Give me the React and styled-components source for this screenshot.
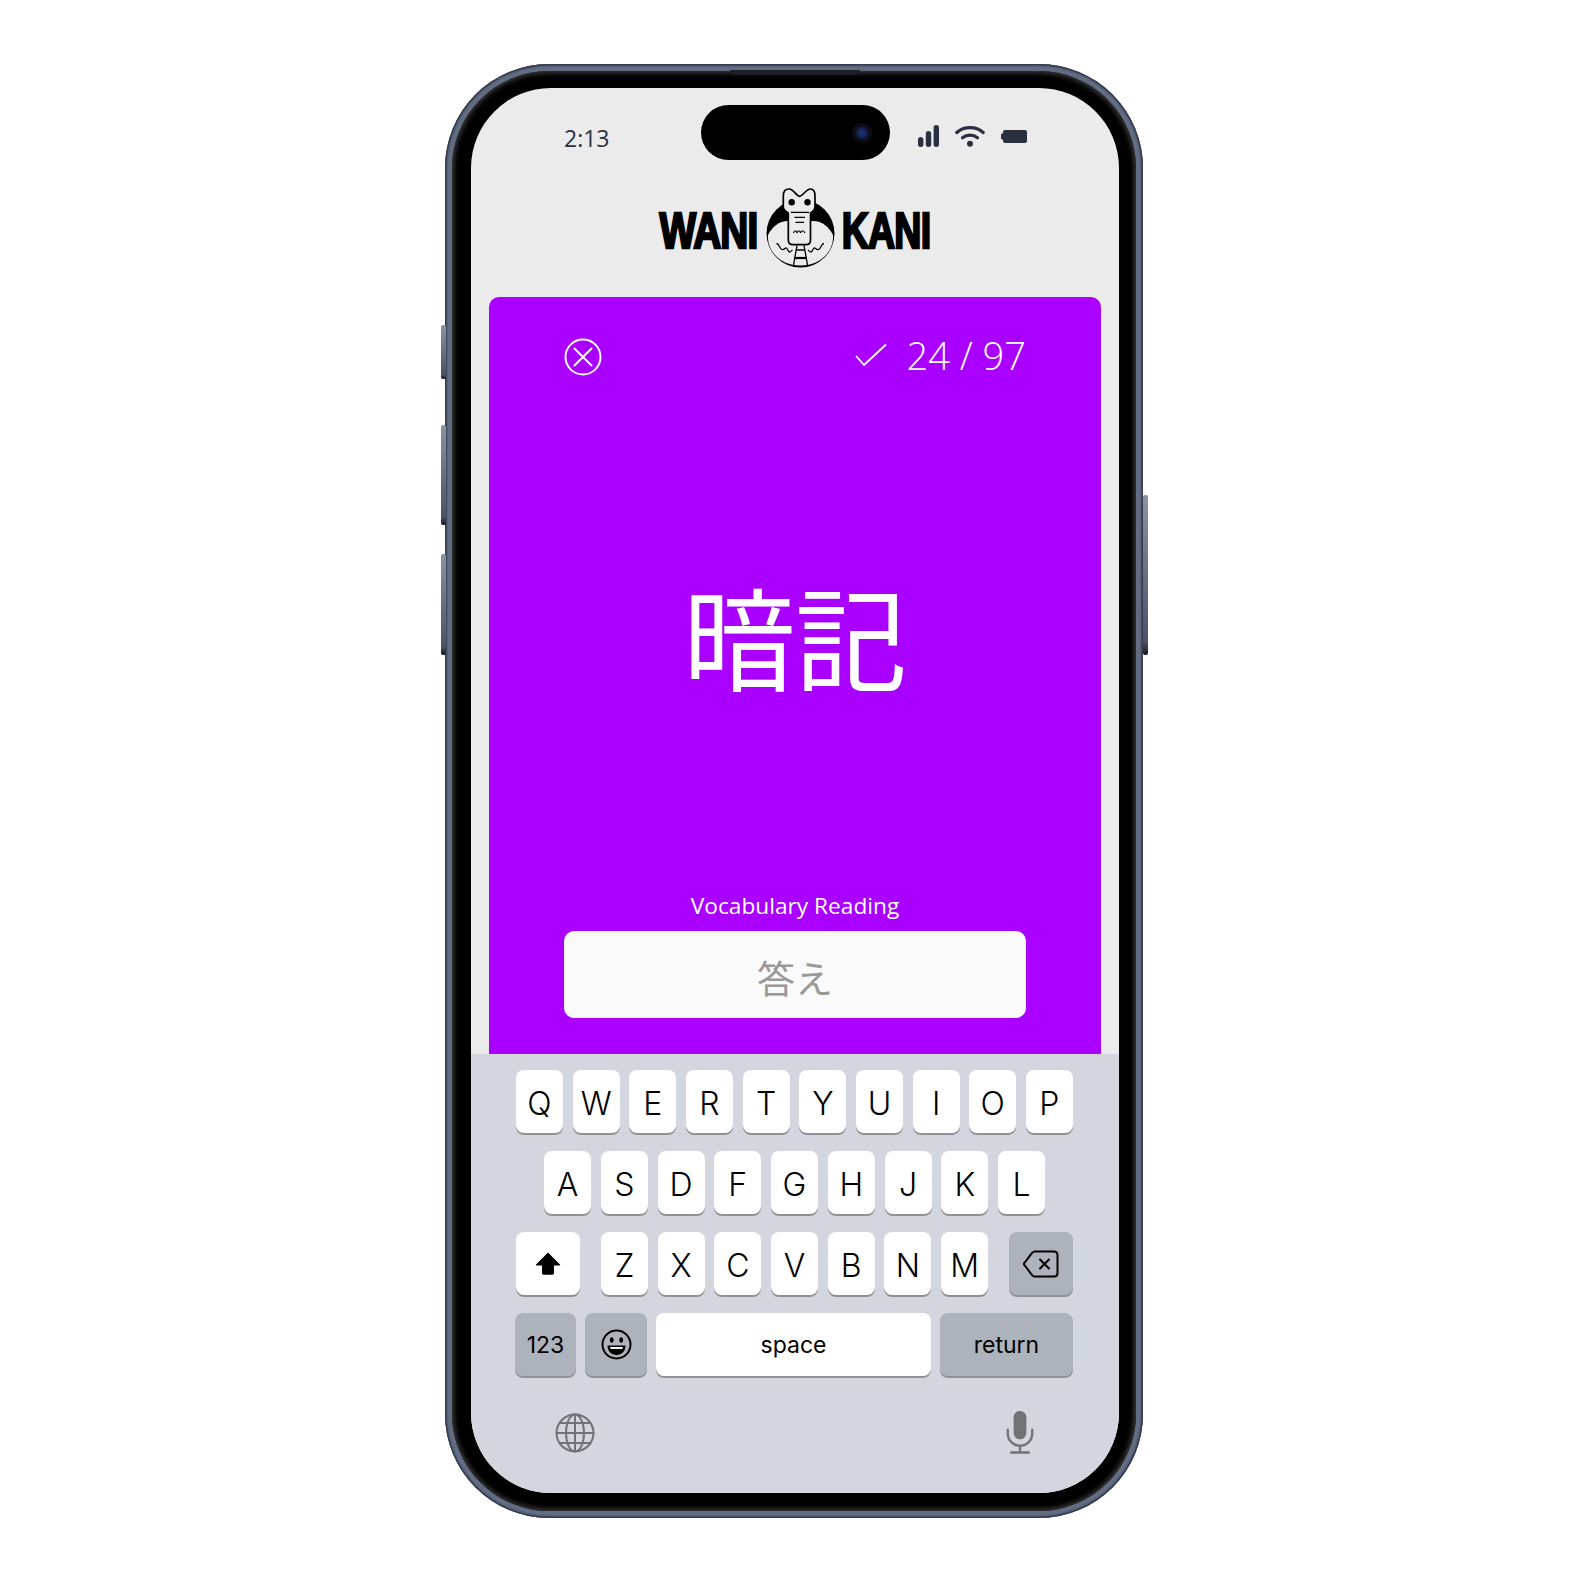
import React from 'react';
import styled, { createGlobalStyle } from 'styled-components';

const rows = ['QWERTYUIOP'.split(''), 'ASDFGHJKL'.split(''), 'ZXCVBNM'.split('')];

const App = () => {
  return (
    <Page>
      <GlobalStyle />
      <Frame>
        <SideButton $top={261} $h={54} />
        <SideButton $top={361} $h={100} />
        <SideButton $top={490} $h={101} />
        <SideButton $right $top={431} $h={160} />
        <Bezel>
          <Speaker />
          <Screen>
            <Top>
              <StatusBar>
                <Time>2:13</Time>
                <Island><Camera /></Island>
                <StatusIcons>
                  <svg width="21" height="22" viewBox="0 0 21 22" fill="#2b3040">
                    <rect x="0" y="12" width="5.4" height="10" rx="2.7" />
                    <rect x="7.8" y="6" width="5.4" height="16" rx="2.7" />
                    <rect x="15.6" y="0" width="5.4" height="22" rx="2.7" />
                  </svg>
                  <svg width="30" height="22" viewBox="0 0 30 22" fill="none" stroke="#2b3040" strokeWidth="3.2" strokeLinecap="round">
                    <path d="M1.8 7.5C9 1 21 1 28.2 7.5" />
                    <path d="M7.5 12.8c4.4-3.6 10.6-3.6 15 0" />
                    <circle cx="15" cy="18.8" r="3" fill="#2b3040" stroke="none" />
                  </svg>
                  <svg width="26" height="13" viewBox="0 0 26 13" fill="#2b3040">
                    <rect x="2" y="0" width="24" height="13" rx="2" />
                    <rect x="0" y="3.5" width="3" height="6" rx="1" />
                  </svg>
                </StatusIcons>
              </StatusBar>
              <Logo>
                <LogoWord $w={99} $scale={0.775}>WANI</LogoWord>
                <Gator />
                <LogoWord $w={84} $scale={0.75}>KANI</LogoWord>
              </Logo>
              <Card>
                <CardHeader>
                  <svg width="38" height="38" viewBox="0 0 38 38" fill="none" stroke="#fff" strokeWidth="2" strokeLinecap="round">
                    <circle cx="19" cy="19" r="17.5" />
                    <path d="M10.5 10.5l17 17M27.5 10.5l-17 17" />
                  </svg>
                  <Progress>
                    <svg width="32" height="24" viewBox="0 0 32 24" fill="none" stroke="#fff" strokeWidth="1.8" strokeLinecap="round" strokeLinejoin="round">
                      <path d="M1.5 13.5l7.5 8.5L30.5 2" />
                    </svg>
                    <Count>24 / 97</Count>
                  </Progress>
                </CardHeader>
                <Kanji lang="ja">暗記</Kanji>
                <Label>Vocabulary Reading</Label>
                <AnswerBox lang="ja">答え</AnswerBox>
              </Card>
            </Top>
            <Keyboard>
              <LetterRow>
                {rows[0].map((k) => <Key key={k}>{k}</Key>)}
              </LetterRow>
              <LetterRow $inset={28}>
                {rows[1].map((k) => <Key key={k}>{k}</Key>)}
              </LetterRow>
              <ShiftRow>
                <ActionKey $w={64} $light>
                  <svg width="26" height="26" viewBox="0 0 26 26" fill="#000">
                    <path d="M13 1.5L25 13.5c.4.5.2 1-.5 1H19v7.5c0 1-.7 1.7-1.7 1.7H8.7c-1 0-1.7-.7-1.7-1.7v-7.5H1.5c-.7 0-.9-.5-.5-1z" />
                  </svg>
                </ActionKey>
                <ShiftLetters>
                  {rows[2].map((k) => <Key key={k}>{k}</Key>)}
                </ShiftLetters>
                <ActionKey $w={64}>
                  <svg width="36" height="28" viewBox="0 0 36 28" fill="none" stroke="#000" strokeWidth="2" strokeLinejoin="round" strokeLinecap="round">
                    <path d="M12 1.5h19c2 0 3.5 1.5 3.5 3.5v18c0 2-1.5 3.5-3.5 3.5H12c-1 0-2-.4-2.7-1.2L1.5 15.2c-.7-.7-.7-1.7 0-2.4L9.3 2.7C10 1.9 11 1.5 12 1.5z" />
                    <path d="M17 9.5l9 9M26 9.5l-9 9" />
                  </svg>
                </ActionKey>
              </ShiftRow>
              <BottomRow>
                <ActionKey $w={61}><SmallText>123</SmallText></ActionKey>
                <ActionKey $w={62}>
                  <svg width="31" height="31" viewBox="0 0 31 31">
                    <circle cx="15.5" cy="15.5" r="14" fill="none" stroke="#000" strokeWidth="2" />
                    <ellipse cx="10.8" cy="11" rx="1.9" ry="2.8" fill="#000" />
                    <ellipse cx="20.2" cy="11" rx="1.9" ry="2.8" fill="#000" />
                    <path d="M6.5 16.5h18c0 6-4 9.5-9 9.5s-9-3.500-9-9.500z" fill="#000" />
                    <path d="M9 18h13c-.3 1.500-.8 2-1.500 2h-10c-.7 0-1.200-.5-1.500-2z" fill="#fff" />
                  </svg>
                </ActionKey>
                <SpaceKey><SmallText>space</SmallText></SpaceKey>
                <ActionKey $w={133}><SmallText>return</SmallText></ActionKey>
              </BottomRow>
              <SystemRow>
                <svg width="40" height="40" viewBox="0 0 40 40" fill="none" stroke="#6f7277" strokeWidth="2">
                  <circle cx="20" cy="20" r="18.5" />
                  <ellipse cx="20" cy="20" rx="9" ry="18.5" />
                  <path d="M20 1.5v37M1.5 20h37M4.5 10h31M4.5 30h31" />
                </svg>
                <svg width="28" height="43" viewBox="0 0 28 44" fill="none" stroke="#6f7277" strokeWidth="2.4">
                  <rect x="7.5" y="0" width="13" height="29" rx="6.5" fill="#6f7277" stroke="none" />
                  <path d="M1.5 19v4c0 7 5.6 12.5 12.5 12.5S26.5 30 26.5 23v-4" strokeLinecap="round" />
                  <path d="M14 35.5V42M4 42.5h20" />
                </svg>
              </SystemRow>
            </Keyboard>
          </Screen>
        </Bezel>
      </Frame>
    </Page>
  );
};

const Gator = () => (
  <svg width="70" height="80" viewBox="0 0 70 80">
    <circle cx="34.5" cy="45.5" r="34" fill="#000" />
    <path d="M2 47C6 39 13 33 22 33H47C56 33 63 39 67 47C68 64 54 77.5 34.5 77.5S1 64 2 47Z" fill="#ebebeb" />
    <g fill="none" stroke="#000" strokeWidth="1.3">
      <path d="M10.500 55.500c3 0 2.500 5 5.500 6c3 1 3.500-4 5.500 0s2.500 2.500 5 .5" />
      <path d="M58 55.500c-3 0-2.500 5-5.500 6c-3 1-3.500-4-5.500 0s-2.500 2.500-5 .5" />
      <path d="M31 57.500l-3.500 19.500M38 57.500l3.500 19.500M29.500 62h10" />
      <path d="M28.500 70h12" strokeWidth="2.200" />
    </g>
    <path d="M17.300 8C17.300 3.500 19 1 23 1C28 1 30 8 33.500 8.300C37 8 40 1 44.500 1C47.500 1 49 3.500 49 8V19Q49 22 44.500 25V52Q44.500 56.700 40 56.700H27Q22.300 56.700 22.300 52V25Q17.300 22 17.300 19Z" fill="#ebebeb" stroke="#000" strokeWidth="1.700" strokeLinejoin="round" />
    <circle cx="25.700" cy="14.300" r="3.200" fill="#000" />
    <circle cx="41.500" cy="14.300" r="3.200" fill="#000" />
    <g fill="none" stroke="#000" strokeWidth="1.200">
      <path d="M25 24.300h18" />
      <path d="M28.500 29.300h10.500M29.500 34.300h8.500" />
      <path d="M27.500 45c1-3 3-3 3.500 0c1-3 3-3 3.500 0c1-3 3-3 4.500 0" />
    </g>
  </svg>
);

export default App;

const GlobalStyle = createGlobalStyle`
  html, body {
    margin: 0;
    background: #fff;
  }
`;

const Page = styled.div`
  width: 1590px;
  height: 1590px;
  box-sizing: border-box;
  padding: 64px 0 0 445px;
`;

const Frame = styled.div`
  position: relative;
  width: 698px;
  height: 1454px;
  box-sizing: border-box;
  padding: 7px;
  border-radius: 104px;
  background: #626d84;
  box-shadow:
    inset 0 0 0 1.5px #343b4d,
    inset 0 0 0 3px #566177;
`;

const SideButton = styled.div`
  position: absolute;
  top: ${(p) => p.$top}px;
  ${(p) => (p.$right ? 'right: -5px;' : 'left: -4px;')}
  width: 5px;
  height: ${(p) => p.$h}px;
  border-radius: 2px;
  background: linear-gradient(180deg, #8a92a3, #4a5366 92%, #14161c);
`;

const Bezel = styled.div`
  position: relative;
  height: 100%;
  box-sizing: border-box;
  padding: 17px 17px 18px 19px;
  border-radius: 97px;
  background: #000;
  box-shadow: inset 0 0 5px 2px #3c3c3c;
`;

const Speaker = styled.div`
  position: absolute;
  top: -1px;
  left: 278px;
  width: 130px;
  height: 5px;
  border-radius: 0 0 6px 6px;
  background: #1d2029;
`;

const Screen = styled.div`
  display: flex;
  flex-direction: column;
  height: 100%;
  border-radius: 80px;
  overflow: hidden;
  background: #ebebeb;
`;

const Top = styled.div`
  display: flex;
  flex-direction: column;
  height: 966px;
  padding: 0 18px;
`;

const StatusBar = styled.div`
  display: grid;
  grid-template-columns: 1fr 189px 1fr;
  align-items: center;
  padding-top: 17px;
`;

const Time = styled.div`
  padding: 10px 0 0 75px;
  font-family: "Open Sans", sans-serif;
  font-size: 23px;
  color: #2b3040;
`;

const Island = styled.div`
  display: flex;
  align-items: center;
  justify-content: flex-end;
  height: 55px;
  padding-right: 18px;
  border-radius: 28px;
  background: #000;
`;

const Camera = styled.div`
  width: 20px;
  height: 20px;
  border-radius: 50%;
  background: radial-gradient(circle, #1b2a6b 0 3px, #0c0d18 7px);
`;

const StatusIcons = styled.div`
  display: flex;
  align-items: center;
  justify-content: flex-end;
  gap: 16px;
  padding: 7px 74px 0 0;
`;

const Logo = styled.div`
  display: flex;
  align-items: flex-end;
  justify-content: center;
  gap: 8px;
  height: 80px;
  margin-top: 28px;
  padding-right: 3px;
`;

const LogoWord = styled.div`
  display: flex;
  justify-content: center;
  width: ${(p) => p.$w}px;
  margin-bottom: 14px;
  font-family: "Liberation Sans", sans-serif;
  font-size: 50px;
  line-height: 46px;
  font-weight: 700;
  letter-spacing: -1px;
  color: #000;
  -webkit-text-stroke: 2.5px #000;
  transform: scaleX(${(p) => p.$scale});
`;

const Card = styled.div`
  display: flex;
  flex: 1;
  flex-direction: column;
  margin-top: 29px;
  padding: 0 75px 36px;
  border-radius: 10px 10px 0 0;
  background: #aa00ff;
  color: #fff;
`;

const CardHeader = styled.div`
  display: flex;
  align-items: center;
  justify-content: space-between;
  margin-top: 41px;
`;

const Progress = styled.div`
  display: flex;
  align-items: center;
  gap: 20px;
  margin-top: -4px;
`;

const Count = styled.div`
  font-family: "Open Sans", sans-serif;
  font-size: 38px;
  font-weight: 300;
  line-height: 38px;
`;

const Kanji = styled.div`
  display: flex;
  flex: 1;
  align-items: center;
  justify-content: center;
  padding-top: 2px;
  font-family: "Noto Sans CJK JP", sans-serif;
  font-size: 112px;
  line-height: 1;
`;

const Label = styled.div`
  margin-bottom: 9px;
  font-family: "Open Sans", sans-serif;
  font-size: 22.7px;
  line-height: 32px;
  text-align: center;
`;

const AnswerBox = styled.div`
  display: flex;
  align-items: center;
  justify-content: center;
  height: 87px;
  box-sizing: border-box;
  padding-top: 4px;
  border-radius: 10px;
  background: #fafafa;
  font-family: "Noto Sans CJK JP", sans-serif;
  font-size: 38px;
  color: #999;
`;

const Keyboard = styled.div`
  display: flex;
  flex: 1;
  flex-direction: column;
  gap: 18px;
  padding: 16px 46px 0 45px;
  background: #d3d6de;
`;

const LetterRow = styled.div`
  display: flex;
  justify-content: space-between;
  padding: 0 ${(p) => p.$inset || 0}px;
`;

const ShiftRow = styled.div`
  display: flex;
  justify-content: space-between;
`;

const ShiftLetters = styled.div`
  display: flex;
  gap: 9.7px;
`;

const BottomRow = styled.div`
  display: flex;
  gap: 9px;
  margin-left: -1px;
`;

const Key = styled.div`
  display: flex;
  align-items: center;
  justify-content: center;
  width: 47px;
  height: 63px;
  box-sizing: border-box;
  padding-top: 3px;
  border-radius: 8px;
  background: #fff;
  box-shadow: 0 2px 0 #8f9196;
  font-family: Inter, sans-serif;
  font-size: 32px;
  font-weight: 350;
  color: #000;
`;

const ActionKey = styled(Key)`
  width: ${(p) => p.$w}px;
  flex: none;
  padding-top: 0;
  background: ${(p) => (p.$light ? '#fff' : '#adb3bc')};
`;

const SpaceKey = styled(Key)`
  flex: 1;
  padding-top: 0;
`;

const SmallText = styled.span`
  font-size: 23px;
  font-weight: 400;
`;

const SystemRow = styled.div`
  display: flex;
  align-items: center;
  justify-content: space-between;
  margin-top: 17px;
  padding: 0 39px;
`;
